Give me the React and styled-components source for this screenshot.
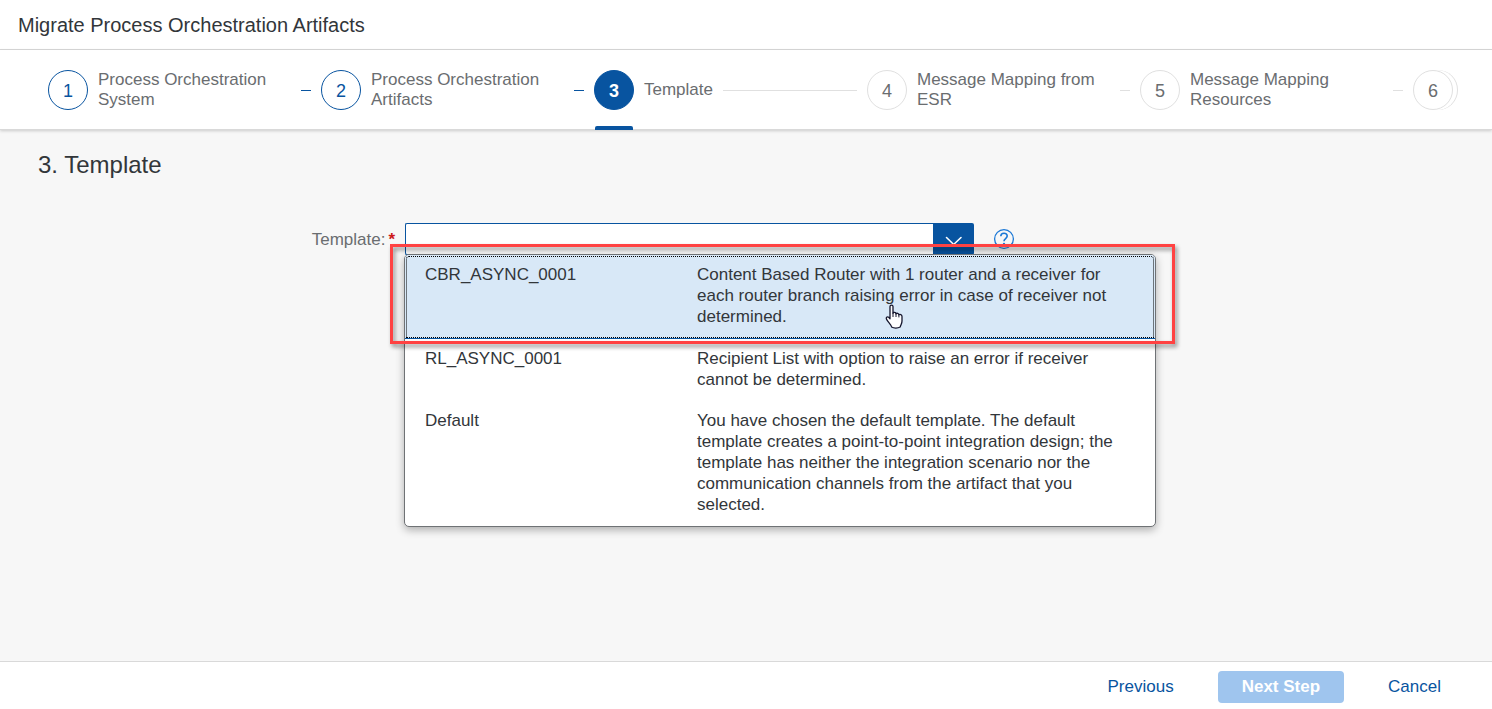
import React from "react";
import styled, { createGlobalStyle, css } from "styled-components";

const color = {
  brand: "#0854a0",
  accent: "#1b78d6",
  text: "#32363a",
  muted: "#6a6d70",
  line: "#d9d9d9",
  page: "#f7f7f7",
  required: "#cc1919",
  highlight: "#ff4242",
};

const GlobalStyle = createGlobalStyle`
  *, *::before, *::after { box-sizing: border-box; }
  body {
    margin: 0;
    background: ${color.page};
    color: ${color.text};
    font-family: "Liberation Sans", Arial, sans-serif;
    font-size: 17px;
    line-height: 21px;
  }
  button, input { font: inherit; }
`;

const Page = styled.div`
  display: flex;
  flex-direction: column;
  min-height: 100vh;
`;

const Header = styled.header`
  padding: 13px 18px 11px;
  background: #fff;
  border-bottom: 1px solid ${color.line};
`;

const PageTitle = styled.h1`
  margin: 0;
  font-size: 20px;
  font-weight: 400;
  line-height: 25px;
`;

const Progress = styled.ol`
  display: flex;
  margin: 0;
  padding: 0 34px 0 48px;
  list-style: none;
  background: #fff;
  border-bottom: 1px solid ${color.line};
  box-shadow: 0 1px 3px rgba(0, 0, 0, 0.18);
`;

const StepItem = styled.li`
  position: relative;
  display: flex;
  flex: ${(p) => (p.$last ? "none" : "1 1 0")};
  align-items: center;
  gap: 10px;
  min-width: 0;
  height: 79px;
  padding-top: 1px;
  padding-right: ${(p) => (p.$last ? 5 : 10)}px;

  ${(p) =>
    p.$state === "current" &&
    css`
      &::after {
        content: "";
        position: absolute;
        left: 1px;
        bottom: -1px;
        width: 38px;
        height: 4px;
        border-radius: 2px 2px 0 0;
        background: ${color.brand};
      }
    `}
`;

const StepCircle = styled.span`
  flex: none;
  width: 40px;
  height: 40px;
  padding-top: 1px;
  border: 1px solid ${(p) => (p.$state === "next" ? "#e0e0e0" : color.brand)};
  border-radius: 50%;
  background: ${(p) => (p.$state === "current" ? color.brand : "#fff")};
  color: ${(p) =>
    ({ done: color.brand, current: "#fff", next: color.muted })[p.$state]};
  font-size: 18px;
  font-weight: ${(p) => (p.$state === "current" ? 700 : 400)};
  line-height: 38px;
  text-align: center;
  box-shadow: ${(p) =>
    p.$stacked ? "4px 0 0 0 #fff, 5px 0 0 0 #e0e0e0" : "none"};
`;

const StepLabel = styled.span`
  flex: 0 1 auto;
  min-width: 0;
  color: ${color.muted};
  line-height: 20px;
`;

const StepLine = styled.span`
  flex: 1 0 10px;
  height: 1px;
  background: ${(p) => (p.$done ? color.brand : "#e0e0e0")};
`;

const Main = styled.main`
  flex: 1;
  padding: 19px 38px;
`;

const SectionTitle = styled.h2`
  margin: 0 0 42px;
  font-size: 24px;
  font-weight: 400;
  line-height: 32px;
`;

const FormRow = styled.div`
  display: grid;
  grid-template-columns: 25% minmax(0, 569px) auto;
  justify-content: start;
  align-items: center;
  column-gap: 10px;
  padding: 0 6px;
`;

const FieldLabel = styled.label`
  color: ${color.muted};
  text-align: right;
`;

const Required = styled.span`
  margin-left: 3px;
  color: ${color.required};
  font-weight: 700;
`;

const ComboBox = styled.div`
  position: relative;
  display: flex;
  height: 32px;
`;

const ComboInput = styled.input`
  flex: 1;
  min-width: 0;
  padding: 0 10px;
  border: 1px solid ${color.brand};
  border-right: 0;
  border-radius: 2px 0 0 2px;
  background: #fff;
  outline: none;
`;

const ComboButton = styled.button`
  display: flex;
  align-items: center;
  justify-content: center;
  width: 41px;
  padding: 4px 0 0;
  border: 0;
  border-radius: 0 2px 2px 0;
  background: ${color.brand};
  color: #fff;
`;

const HelpButton = styled.button`
  display: flex;
  margin-left: 9px;
  padding: 0;
  border: 0;
  background: none;
  color: ${color.accent};
`;

const Popup = styled.ul`
  position: absolute;
  top: 31px;
  left: -1px;
  width: 752px;
  margin: 0;
  padding: 0;
  list-style: none;
  background: #fff;
  border: 1px solid #6f7275;
  border-radius: 5px;
  box-shadow: 0 3px 8px rgba(0, 0, 0, 0.3);
`;

const Option = styled.li`
  position: relative;
  display: grid;
  grid-template-columns: 252px minmax(0, 1fr);
  column-gap: 20px;
  padding: 9px 20px 11px;

  ${(p) =>
    p.$focused &&
    css`
      background: #d8e8f7;
      border-bottom: 1px solid ${color.brand};
      border-radius: 4px 4px 0 0;
      outline: 1px dotted #000;
      outline-offset: -2px;
    `}
`;

const HighlightFrame = styled.div`
  position: absolute;
  inset: -11px -20px -6px -15px;
  border: 3px solid ${color.highlight};
  filter: drop-shadow(2px 3px 2px rgba(0, 0, 0, 0.45));
  pointer-events: none;
`;

const Pointer = styled.svg`
  position: absolute;
  top: 49px;
  left: 479px;
`;

const Footer = styled.footer`
  display: flex;
  justify-content: flex-end;
  gap: 20px;
  padding: 9px 27px 6px;
  background: #fff;
  border-top: 1px solid ${color.line};
`;

const FooterButton = styled.button`
  height: 32px;
  padding: 0 24px 2px;
  border: 0;
  border-radius: 4px;
  background: ${(p) => (p.$primary ? "#9fc5ee" : "transparent")};
  color: ${(p) => (p.$primary ? "#fff" : color.brand)};
  font-weight: ${(p) => (p.$primary ? 700 : 400)};
`;

const steps = [
  { label: "Process Orchestration System", state: "done" },
  { label: "Process Orchestration Artifacts", state: "done" },
  { label: "Template", state: "current" },
  { label: "Message Mapping from ESR", state: "next" },
  { label: "Message Mapping Resources", state: "next" },
  { state: "next" },
];

const templates = [
  {
    name: "CBR_ASYNC_0001",
    description:
      "Content Based Router with 1 router and a receiver for each router branch raising error in case of receiver not determined.",
  },
  {
    name: "RL_ASYNC_0001",
    description:
      "Recipient List with option to raise an error if receiver cannot be determined.",
  },
  {
    name: "Default",
    description:
      "You have chosen the default template. The default template creates a point-to-point integration design; the template has neither the integration scenario nor the communication channels from the artifact that you selected.",
  },
];

function HandPointer() {
  return (
    <Pointer width="20" height="26" viewBox="0 0 20 26" aria-hidden="true">
      <path
        d="M6 2.6C6 .5 9 .5 9 2.6V9.2C9.5 8 11.8 8.2 12 9.8C12.7 8.8 14.7 9.2 14.9 10.8C15.8 10 18 10.6 18 12.5V17C18 19.8 16.6 20.8 16.2 23C13.8 24.4 9.8 24.4 7.6 23C7.2 20.6 4.2 18.4 2.6 15.4C1.5 13.6 3.2 12.2 4.7 13.3L6 14.8Z"
        fill="#fff"
        stroke="#15152c"
        strokeWidth="1.3"
        strokeLinejoin="round"
      />
      <path
        d="M9 9V12.6M12 10V12.6M14.9 11V13"
        fill="none"
        stroke="#15152c"
        strokeWidth="1"
        strokeLinecap="round"
      />
    </Pointer>
  );
}

export default function App() {
  return (
    <Page>
      <GlobalStyle />
      <Header>
        <PageTitle>Migrate Process Orchestration Artifacts</PageTitle>
      </Header>
      <Progress>
        {steps.map((step, i) => {
          const last = i === steps.length - 1;
          return (
            <StepItem
              key={i}
              $state={step.state}
              $last={last}
              aria-current={step.state === "current" ? "step" : undefined}
            >
              <StepCircle $state={step.state} $stacked={last}>
                {i + 1}
              </StepCircle>
              {step.label && <StepLabel>{step.label}</StepLabel>}
              {!last && <StepLine $done={step.state === "done"} />}
            </StepItem>
          );
        })}
      </Progress>
      <Main>
        <SectionTitle>3. Template</SectionTitle>
        <FormRow>
          <FieldLabel htmlFor="template">
            Template:<Required>*</Required>
          </FieldLabel>
          <ComboBox>
            <ComboInput
              id="template"
              type="text"
              role="combobox"
              aria-expanded="true"
              aria-controls="template-list"
              autoComplete="off"
              required
            />
            <ComboButton type="button" aria-label="Show templates">
              <svg width="18" height="12" viewBox="0 0 18 12" aria-hidden="true">
                <path
                  d="M1.5 2.5L8.7 9.5L16 2.5"
                  fill="none"
                  stroke="currentColor"
                  strokeWidth="1.6"
                  strokeLinecap="round"
                />
              </svg>
            </ComboButton>
            <Popup id="template-list" role="listbox" aria-label="Templates">
              {templates.map((item, i) => (
                <Option
                  key={item.name}
                  role="option"
                  aria-selected={i === 0}
                  $focused={i === 0}
                >
                  <span>{item.name}</span>
                  <span>{item.description}</span>
                  {i === 0 && <HighlightFrame />}
                  {i === 0 && <HandPointer />}
                </Option>
              ))}
            </Popup>
          </ComboBox>
          <HelpButton type="button" aria-label="Help">
            <svg width="22" height="22" viewBox="0 0 22 22" aria-hidden="true">
              <circle
                cx="11"
                cy="11"
                r="9.4"
                fill="none"
                stroke="currentColor"
                strokeWidth="1.3"
              />
              <path
                d="M7.8 8.2C7.8 4.2 14.2 4.2 14.2 8.1C14.2 10.5 11 10.6 11 13.2"
                fill="none"
                stroke="currentColor"
                strokeWidth="1.6"
              />
              <circle cx="11" cy="15.8" r="1.1" fill="currentColor" />
            </svg>
          </HelpButton>
        </FormRow>
      </Main>
      <Footer>
        <FooterButton type="button">Previous</FooterButton>
        <FooterButton type="button" $primary disabled>
          Next Step
        </FooterButton>
        <FooterButton type="button">Cancel</FooterButton>
      </Footer>
    </Page>
  );
}
